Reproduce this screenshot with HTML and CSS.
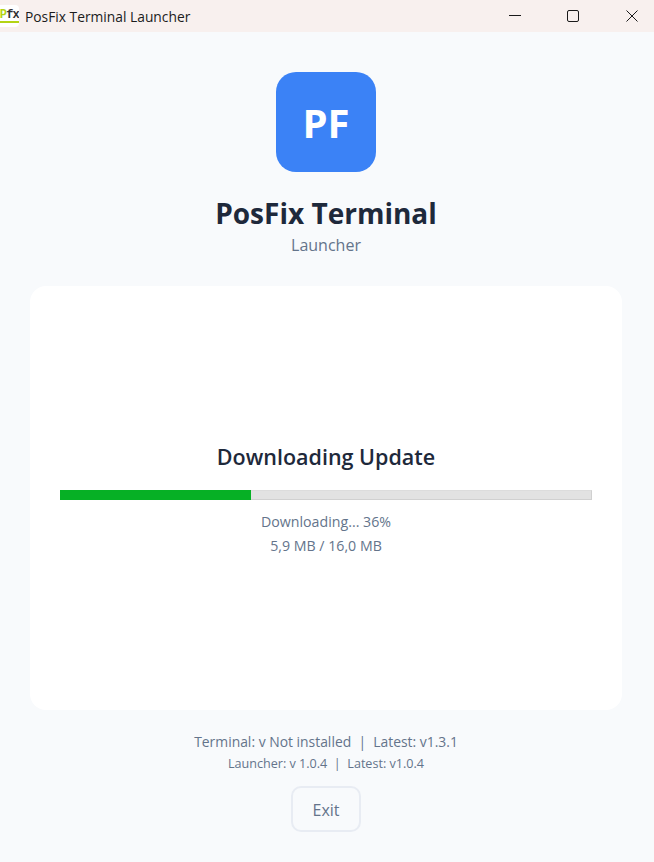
FILE: index.html
```html
<!DOCTYPE html>
<html lang="en">
<head>
<meta charset="utf-8">
<title>PosFix Terminal Launcher</title>
<link rel="stylesheet" href="styles.css">
</head>
<body>
<div class="window">
  <header class="titlebar">
    <div class="app-icon"><span class="app-icon-text"><b class="p">P</b>fx</span></div>
    <span class="window-title">PosFix Terminal Launcher</span>
    <div class="window-controls">
      <svg class="ctl" width="13" height="12" viewBox="0 0 13 12"><path d="M1 5.5H13" stroke="#1a1a1a" stroke-width="1" fill="none"/></svg>
      <svg class="ctl" width="12" height="12" viewBox="0 0 12 12"><rect x="0.5" y="0.5" width="11" height="11" rx="1.5" stroke="#1a1a1a" stroke-width="1" fill="none"/></svg>
      <svg class="ctl" width="12" height="12" viewBox="0 0 12 12"><path d="M0.5 0.5L11.5 11.5M11.5 0.5L0.5 11.5" stroke="#1a1a1a" stroke-width="1" fill="none"/></svg>
    </div>
  </header>
  <main class="content">
    <div class="logo">PF</div>
    <h1 class="title">PosFix Terminal</h1>
    <div class="subtitle">Launcher</div>
    <section class="card">
      <h2 class="card-title">Downloading Update</h2>
      <div class="progress"><div class="progress-fill" style="width:36%"></div></div>
      <div class="status">Downloading... 36%</div>
      <div class="status">5,9 MB / 16,0 MB</div>
    </section>
    <div class="ver ver-main">Terminal: v Not installed &nbsp;|&nbsp; Latest: v1.3.1</div>
    <div class="ver ver-small">Launcher: v 1.0.4 &nbsp;|&nbsp; Latest: v1.0.4</div>
    <button class="exit">Exit</button>
  </main>
</div>
</body>
</html>
```
FILE: styles.css
```css
* { box-sizing: border-box; }
html, body { margin: 0; padding: 0; height: 100%; }
body { font-family: "Open Sans", "Noto Sans", sans-serif; background: #f8fafc; overflow: hidden; }
.window { display: flex; flex-direction: column; height: 862px; }
.titlebar { height: 32px; flex: none; display: flex; align-items: center; background: #f8f0ee; }
.app-icon { width: 19px; height: 22px; margin-right: 6px; display: flex; align-items: center; justify-content: flex-end; background: #fff; border-radius: 0 4px 4px 0; overflow: hidden; }
.app-icon-text { font: 700 12px/11px "Liberation Mono", monospace; color: #333; letter-spacing: -0.8px; border-bottom: 2px solid #b4d414; white-space: nowrap; }
.app-icon-text .p { color: #b4d414; }
.window-title { font-size: 13.8px; color: #1c1c1c; }
.window-controls { margin-left: auto; display: flex; gap: 46px; padding-right: 16px; }
.ctl { display: block; }
.ctl:last-child { margin-left: 1px; }
.content { flex: 1; display: flex; flex-direction: column; align-items: center; padding: 40px 32px 0 30px; }
.logo { width: 100px; height: 100px; border-radius: 20px; background: #3b82f6; color: #fff; font-size: 40px; font-weight: 700; display: flex; align-items: center; justify-content: center; }
.title { margin: 20px 0 0; font-size: 28px; line-height: 42px; font-weight: 700; color: #1e293b; }
.subtitle { font-size: 16px; line-height: 22px; color: #64748b; }
.card { width: 592px; height: 424px; margin-top: 30px; background: #fff; border-radius: 16px; padding: 3px 30px 0; display: flex; flex-direction: column; align-items: stretch; justify-content: center; }
.card-title { margin: 0 0 17px; text-align: center; font-size: 21.5px; line-height: 32px; font-weight: 600; color: #1e293b; }
.progress { height: 10px; background: #e2e2e2; border: 1px solid #d0d0d0; border-top-color: #dcdcdc; margin-bottom: 10px; }
.progress-fill { height: 10px; margin: -1px 0 0 -1px; background: #06b025; }
.status { text-align: center; font-size: 14.2px; line-height: 24px; color: #64748b; }
.ver { text-align: center; color: #64748b; }
.ver-main { font-size: 13.9px; line-height: 22px; margin-top: 21px; }
.ver-small { font-size: 12.6px; line-height: 20px; margin-top: 1px; }
.exit { margin-top: 12px; width: 70px; height: 46px; border: 2px solid #e8ecf3; border-radius: 10px; background: transparent; font-family: inherit; font-size: 16px; color: #64748b; padding: 1px 0 0; }
```
